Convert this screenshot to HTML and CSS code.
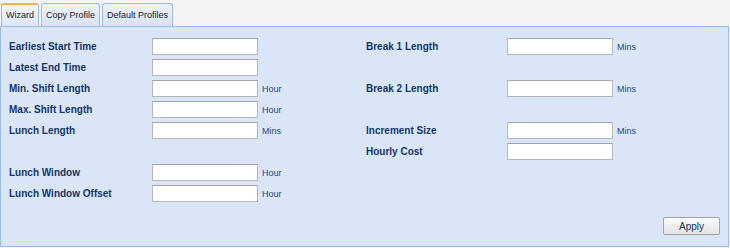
FILE: index.html
```html
<!DOCTYPE html>
<html lang="en">
<head>
    <meta charset="UTF-8">
    <title>Shift Profile</title>
    <link rel="stylesheet" href="styles.css">
</head>
<body>
    <div class="tabs">
        <div class="tab active">Wizard</div>
        <div class="tab">Copy Profile</div>
        <div class="tab">Default Profiles</div>
    </div>
    <div class="panel">
        <div class="columns">
            <div class="col left">
                <div class="field"><label>Earliest Start Time</label><input type="text"></div>
                <div class="field"><label>Latest End Time</label><input type="text"></div>
                <div class="field"><label>Min. Shift Length</label><input type="text"><span class="unit">Hour</span></div>
                <div class="field"><label>Max. Shift Length</label><input type="text"><span class="unit">Hour</span></div>
                <div class="field"><label>Lunch Length</label><input type="text"><span class="unit">Mins</span></div>
                <div class="field"></div>
                <div class="field"><label>Lunch Window</label><input type="text"><span class="unit">Hour</span></div>
                <div class="field"><label>Lunch Window Offset</label><input type="text"><span class="unit">Hour</span></div>
            </div>
            <div class="col right">
                <div class="field"><label>Break 1 Length</label><input type="text"><span class="unit">Mins</span></div>
                <div class="field"></div>
                <div class="field"><label>Break 2 Length</label><input type="text"><span class="unit">Mins</span></div>
                <div class="field"></div>
                <div class="field"><label>Increment Size</label><input type="text"><span class="unit">Mins</span></div>
                <div class="field"><label>Hourly Cost</label><input type="text"></div>
            </div>
        </div>
        <div class="actions">
            <button class="apply">Apply</button>
        </div>
    </div>
</body>
</html>
```

FILE: styles.css
```css
* {
    margin: 0;
    padding: 0;
    box-sizing: border-box;
    font-family: "Liberation Sans", Arial, sans-serif;
}

body {
    background: #f4f4f4;
    width: 730px;
    height: 248px;
}

.tabs {
    display: flex;
    gap: 2px;
    padding: 3px 0 0 1px;
    height: 26px;
}

.tab {
    height: 23px;
    padding: 0 4px;
    border: 1px solid #99bbe8;
    border-bottom: none;
    border-radius: 3px 3px 0 0;
    background: linear-gradient(#eef3fa, #d6e2f3);
    color: #222;
    font-size: 9px;
    line-height: 23px;
}

.tab.active {
    border-top: 2px solid #f3b24a;
    line-height: 21px;
    background: linear-gradient(#f3f6fb, #dbe6f5);
}

.panel {
    width: 729px;
    height: 221px;
    border: 1px solid #99bbe8;
    background: #dae6f8;
    padding: 9px 8px 11px 8px;
    display: flex;
    flex-direction: column;
}

.columns {
    display: flex;
}

.col {
    display: grid;
    grid-template-rows: repeat(8, 21px);
    align-content: start;
}

.col.left {
    width: 357px;
}

.field {
    display: flex;
    align-items: center;
}

.field label {
    font-size: 10px;
    font-weight: bold;
    color: #13356a;
}

.left label {
    width: 143px;
}

.right label {
    width: 141px;
}

.field input {
    width: 106px;
    height: 17px;
    border: 1px solid #b6b6b6;
    border-top-color: #a4a4a4;
    background: #fff;
}

.unit {
    padding-left: 4px;
    font-size: 9px;
    color: #24467c;
}

.actions {
    margin-top: auto;
    display: flex;
    justify-content: flex-end;
}

.apply {
    width: 57px;
    height: 18px;
    border: 1px solid #a3a3a3;
    border-radius: 2px;
    background: linear-gradient(#fbfbfb, #e4e4e4);
    color: #1c2f55;
    font-size: 10px;
}
```
